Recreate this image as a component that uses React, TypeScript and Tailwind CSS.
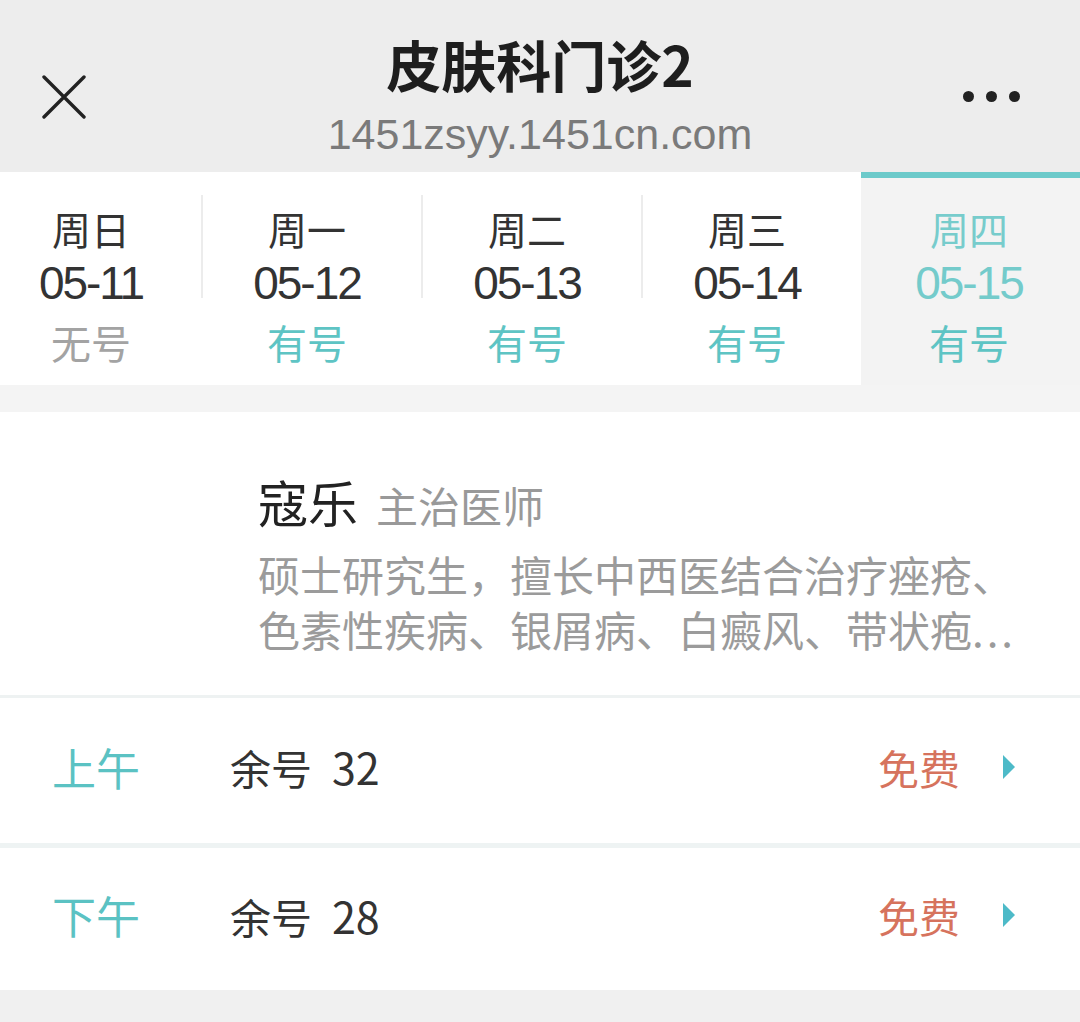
import React from "react";

const CJK = '"Noto Sans CJK SC", "Noto Sans", sans-serif';
const LAT = '"Liberation Sans", Arial, sans-serif';

const days = [
  { d: "周日", date: "05-11", s: "无号", has: false },
  { d: "周一", date: "05-12", s: "有号", has: true },
  { d: "周二", date: "05-13", s: "有号", has: true },
  { d: "周三", date: "05-14", s: "有号", has: true },
];

function Row({ label, count }: { label: string; count: string }) {
  return (
    <div className="flex items-center h-full pl-[52px] pr-[64px] pb-[8px]">
      <div className="w-[178px] text-[44px] leading-[56px] text-[#5bc2c3]">{label}</div>
      <div className="flex-1 text-[41px] leading-[56px] text-[#333]">
        余号<span className="ml-[20px] text-[43px]">{count}</span>
      </div>
      <div className="text-[41px] leading-[56px] text-[#d6735d]">免费</div>
      <svg width="14" height="26" viewBox="0 0 14 26" className="ml-[42px]">
        <path d="M1 1 L13 13 L1 25 Z" fill="#4dbac8" />
      </svg>
    </div>
  );
}

export default function App() {
  return (
    <div className="w-[1080px] h-[1022px] overflow-hidden bg-[#f0f0f0]" style={{ fontFamily: CJK }}>
      {/* Header */}
      <div className="h-[172px] bg-[#ededed] grid grid-cols-[1fr_auto_1fr] items-start">
        <div className="pl-[42px] pt-[75px]">
          <svg width="44" height="44" viewBox="0 0 44 44">
            <path d="M2 2 L42 42 M42 2 L2 42" stroke="#222" strokeWidth="3.4" strokeLinecap="round" />
          </svg>
        </div>
        <div className="flex flex-col items-center pt-[31px]">
          <div className="text-[55px] leading-[64px] font-bold text-[#1e1e1e]">皮肤科门诊2</div>
          <div className="mt-[14px] text-[43px] leading-[50px] text-[#7a7a7a]" style={{ fontFamily: LAT }}>
            1451zsyy.1451cn.com
          </div>
        </div>
        <div className="flex justify-end pr-[60px] pt-[91px] gap-[12px]">
          <span className="w-[11px] h-[11px] rounded-full bg-[#222]" />
          <span className="w-[11px] h-[11px] rounded-full bg-[#222]" />
          <span className="w-[11px] h-[11px] rounded-full bg-[#222]" />
        </div>
      </div>

      {/* Tabs */}
      <div className="h-[213px] bg-white flex overflow-hidden">
        <div className="flex ml-[-19px]">
          {days.map((x, i) => (
            <React.Fragment key={x.date}>
              {i > 0 && <div className="w-[2px] h-[103px] mt-[23px] bg-[#ececec]" />}
              <div className={`${i === 0 ? "w-[220px]" : "w-[218px] pr-[10px]"} flex flex-col items-center pt-[32px]`}>
                <div className="text-[39px] leading-[48px] text-[#333]">{x.d}</div>
                <div className="mt-[3px] text-[46px] leading-[56px] tracking-[-2px] text-[#333]" style={{ fontFamily: LAT }}>
                  {x.date}
                </div>
                <div className={`mt-[7px] text-[40px] leading-[48px] ${x.has ? "text-[#5ec4c4]" : "text-[#a3a3a3]"}`}>
                  {x.s}
                </div>
              </div>
            </React.Fragment>
          ))}
        </div>
        <div className="flex-1 bg-[#f3f3f3] border-t-[6px] border-[#6ccaca] flex flex-col items-center pt-[26px] pr-[3px]">
          <div className="text-[39px] leading-[48px] text-[#77cccc]">周四</div>
          <div className="mt-[3px] text-[46px] leading-[56px] tracking-[-2px] text-[#74cbcb]" style={{ fontFamily: LAT }}>
            05-15
          </div>
          <div className="mt-[7px] text-[40px] leading-[48px] text-[#5ec4c4]">有号</div>
        </div>
      </div>

      <div className="h-[27px] bg-[#f4f4f4]" />

      {/* Doctor card */}
      <div className="h-[283px] bg-white pl-[258px] pt-[59px]">
        <div className="flex items-baseline h-[60px] leading-[60px]">
          <span className="text-[50px] text-[#222]">寇乐</span>
          <span className="ml-[18px] text-[42px] text-[#999]">主治医师</span>
        </div>
        <div className="mt-[15px] text-[42px] leading-[55px] text-[#9b9b9b] whitespace-nowrap">
          <div>硕士研究生，擅长中西医结合治疗痤疮、</div>
          <div>
            色素性疾病、银屑病、白癜风、带状疱<span className="tracking-[3px]">...</span>
          </div>
        </div>
      </div>

      <div className="h-[3px] bg-[#eef2f2]" />

      <div className="h-[145px] bg-white">
        <Row label="上午" count="32" />
      </div>
      <div className="h-[5px] bg-[#eef3f3]" />
      <div className="h-[142px] bg-white">
        <Row label="下午" count="28" />
      </div>
      <div className="h-[32px] bg-[#f0f0f0]" />
    </div>
  );
}
